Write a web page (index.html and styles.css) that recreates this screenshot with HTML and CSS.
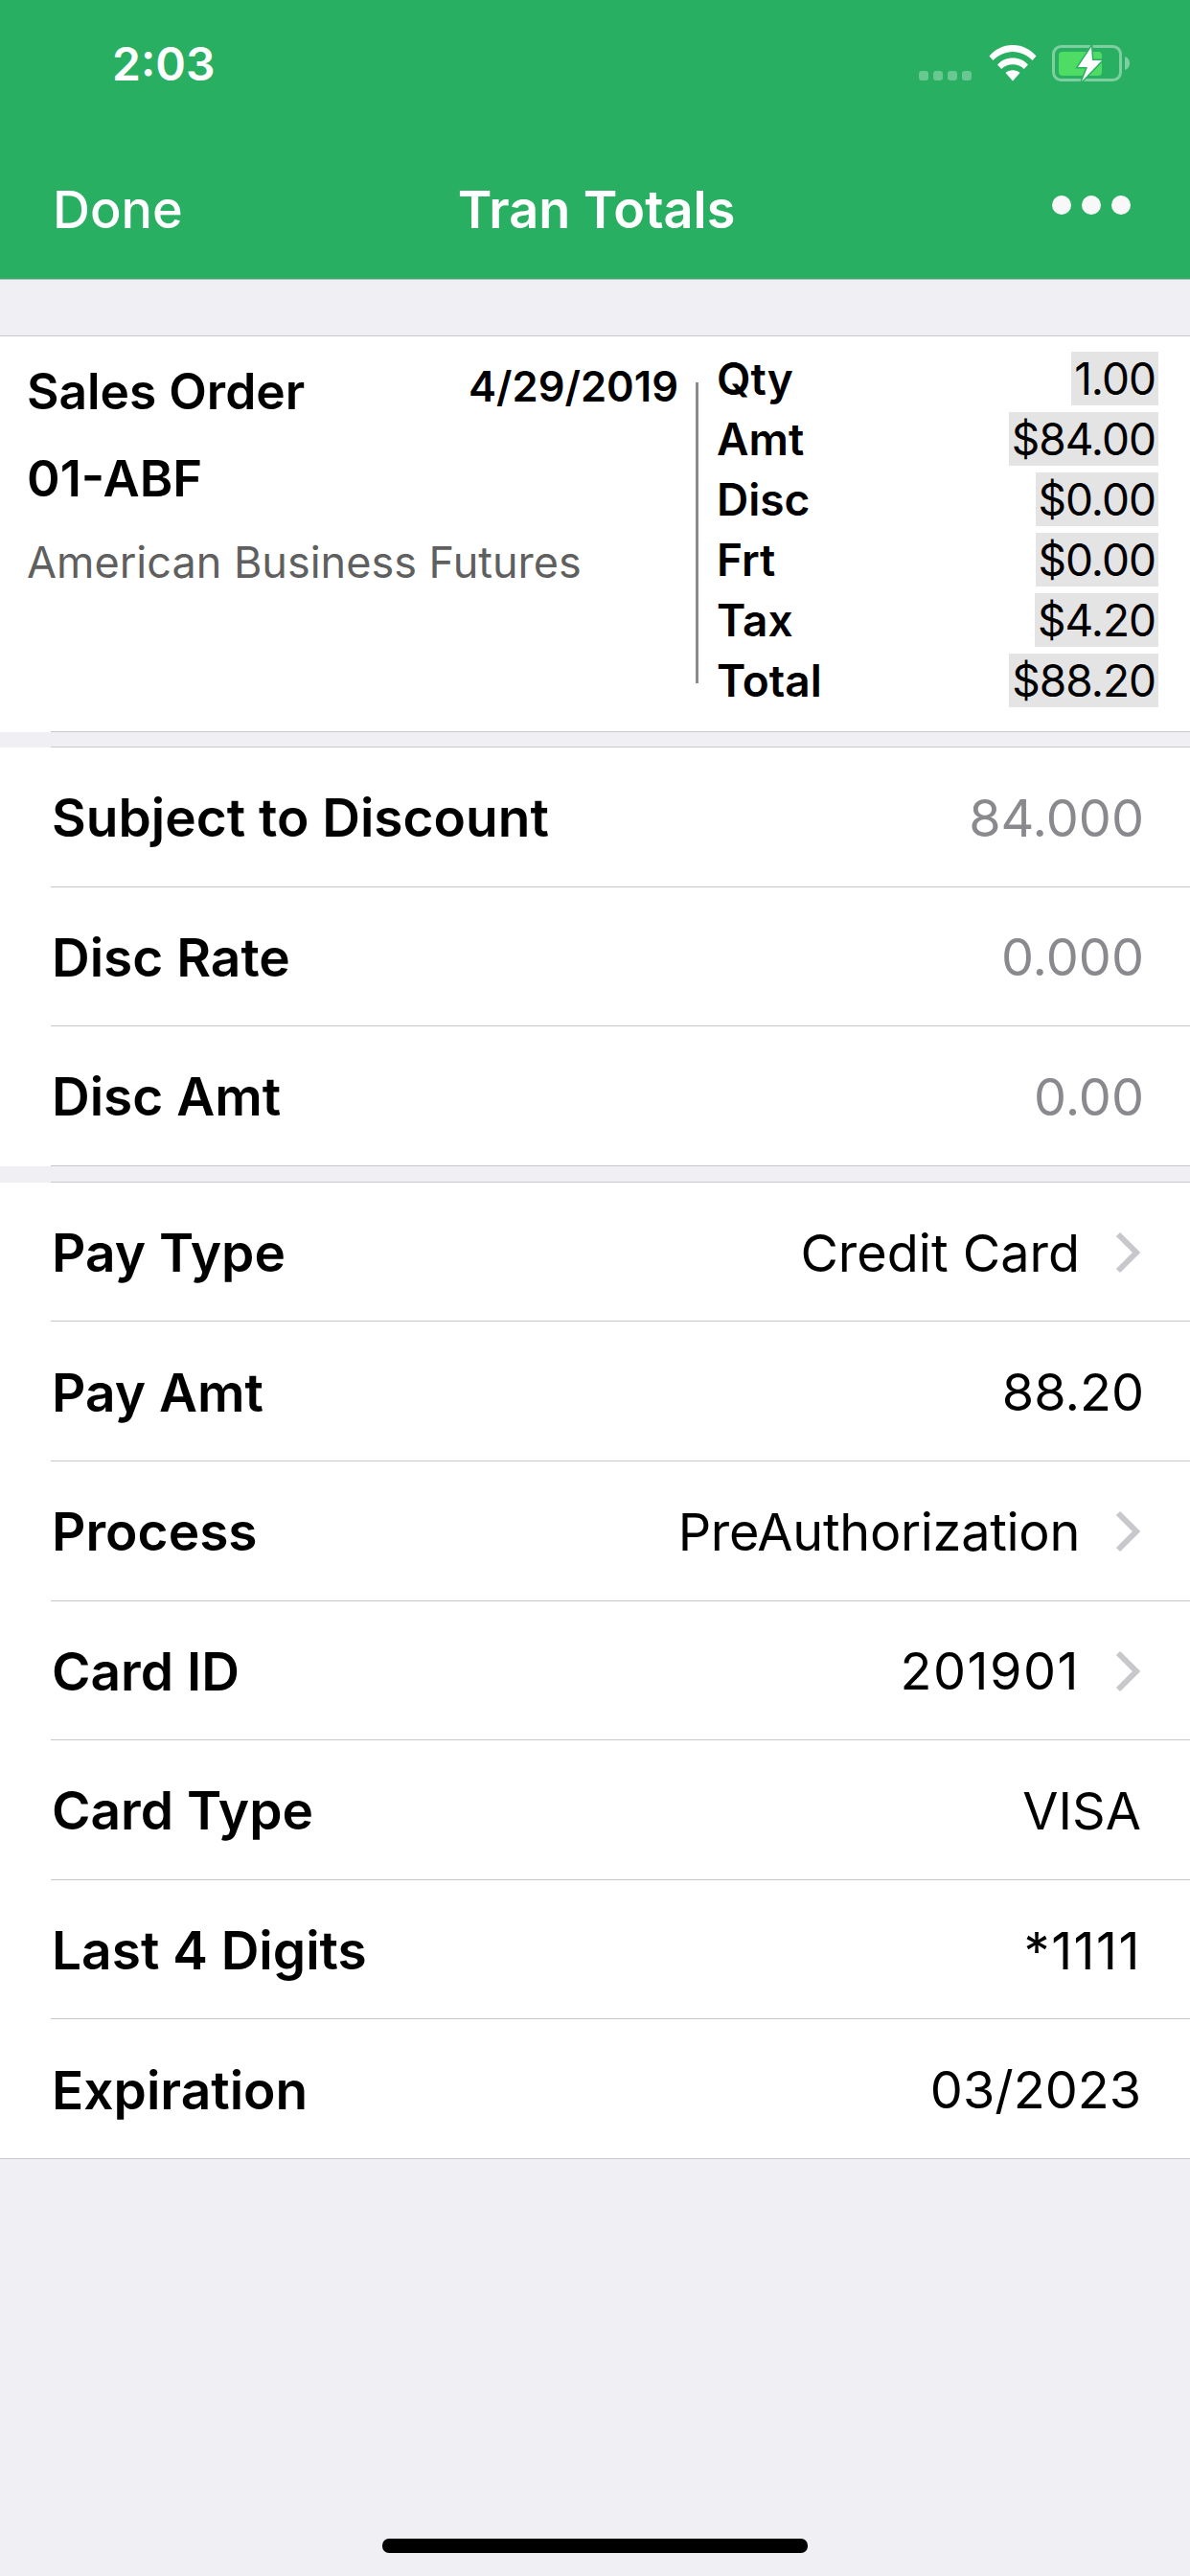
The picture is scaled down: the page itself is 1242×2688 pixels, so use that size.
FILE: index.html
```html
<!DOCTYPE html>
<html lang="en">
<head>
    <meta charset="UTF-8">
    <meta name="viewport" content="width=device-width, initial-scale=1.0">
    <title>Tran Totals</title>
    <link rel="stylesheet" href="styles.css">
</head>
<body>
    <header class="topbar">
        <div class="status">
            <span class="time">2:03</span>
            <div class="status-icons">
                <div class="signal"><i></i><i></i><i></i><i></i></div>
                <svg class="wifi" width="50" height="38" viewBox="0 0 50 38">
                    <path fill="#fff" d="M0.5 11.5C6.500 4.500 15 0 25 0s18.500 4.500 24.500 11.500l-4 4.500C40 10.500 33 7 25 7S10 10.500 4.500 16z"/>
                    <path fill="#fff" d="M9 20.500C13 16 18.500 13.500 25 13.500s12 2.500 16 7l-4.200 4.500C33.800 22 29.800 20.300 25 20.300S16.200 22 13.200 25z"/>
                    <path fill="#fff" d="M17.500 29C19.500 27.200 22 26.300 25 26.300s5.500 0.900 7.500 2.700L25 37.500z"/>
                </svg>
                <svg class="battery" width="82" height="38" viewBox="0 0 82 38">
                    <rect x="1.500" y="1.500" width="70" height="35" rx="8" fill="none" stroke="#fff" stroke-opacity="0.4" stroke-width="3"/>
                    <path d="M76 12c3 1 5 3.500 5 7s-2 6-5 7z" fill="#fff" fill-opacity="0.4"/>
                    <rect x="7" y="7" width="45" height="25" rx="4" fill="#4fdc64"/>
                    <path d="M41 2L27 23h10l-6 15 21-22H42z" fill="#fff" stroke="#29af62" stroke-width="3" paint-order="stroke"/>
                </svg>
            </div>
        </div>
        <nav class="navbar">
            <a class="nav-done">Done</a>
            <h1 class="nav-title">Tran Totals</h1>
            <div class="nav-more"><i></i><i></i><i></i></div>
        </nav>
    </header>

    <section class="summary">
        <div class="sum-left">
            <div class="sum-head">
                <span class="sum-type">Sales Order</span>
                <span class="sum-date">4/29/2019</span>
            </div>
            <div class="sum-code">01-ABF</div>
            <div class="sum-name">American Business Futures</div>
        </div>
        <div class="sum-divider"></div>
        <ul class="sum-totals">
            <li><b>Qty</b><span>1.00</span></li>
            <li><b>Amt</b><span>$84.00</span></li>
            <li><b>Disc</b><span>$0.00</span></li>
            <li><b>Frt</b><span>$0.00</span></li>
            <li><b>Tax</b><span>$4.20</span></li>
            <li><b>Total</b><span>$88.20</span></li>
        </ul>
    </section>

    <div class="gap gap-first"></div>
    <section class="group">
        <div class="row"><b>Subject to Discount</b><span class="num muted">84.000</span></div>
        <div class="row"><b>Disc Rate</b><span class="num muted">0.000</span></div>
        <div class="row"><b>Disc Amt</b><span class="num muted">0.00</span></div>
    </section>

    <div class="gap"></div>
    <section class="group">
        <div class="row"><b>Pay Type</b><span>Credit Card</span><svg class="chev" width="28" height="44" viewBox="0 0 28 44"><path d="M3 3l19 19L3 41" fill="none" stroke="#c7c7cc" stroke-width="6"/></svg></div>
        <div class="row"><b>Pay Amt</b><span class="num">88.20</span></div>
        <div class="row"><b>Process</b><span class="tight">PreAuthorization</span><svg class="chev" width="28" height="44" viewBox="0 0 28 44"><path d="M3 3l19 19L3 41" fill="none" stroke="#c7c7cc" stroke-width="6"/></svg></div>
        <div class="row"><b>Card ID</b><span class="wide">201901</span><svg class="chev" width="28" height="44" viewBox="0 0 28 44"><path d="M3 3l19 19L3 41" fill="none" stroke="#c7c7cc" stroke-width="6"/></svg></div>
        <div class="row"><b>Card Type</b><span>VISA</span></div>
        <div class="row"><b>Last 4 Digits</b><span class="wide">*1111</span></div>
        <div class="row row-last"><b>Expiration</b><span>03/2023</span></div>
    </section>

    <div class="home-bar"></div>
</body>
</html>
```

FILE: styles.css
```css
/* Global Styles */
* {
    box-sizing: border-box;
}
body {
    font-family: Inter, "Noto Sans", sans-serif;
    background-color: #efeff4;
    color: #000;
    margin: 0;
    height: 2688px;
    display: flex;
    flex-direction: column;
}

/* Green top bar */
.topbar {
    background-color: #29af62;
    color: #fff;
    height: 292px;
    border-bottom: 1px solid #b9b9bd;
}
.status {
    display: flex;
    justify-content: space-between;
    height: 180px;
    padding: 42px 62px 0 117px;
}
.time {
    font-size: 48px;
    font-weight: 600;
    line-height: 50px;
}
.status-icons {
    display: flex;
    align-items: flex-start;
    padding-top: 5px;
}
.signal {
    display: flex;
    gap: 5px;
    margin: 27px 18px 0 0;
}
.signal i {
    width: 10px;
    height: 10px;
    border-radius: 3px;
    background-color: rgba(255, 255, 255, 0.3);
}
.battery {
    margin-left: 16px;
}
.navbar {
    display: grid;
    grid-template-columns: 1fr auto 1fr;
    align-items: center;
    height: 76px;
    padding: 0 62px 0 55px;
}
.nav-done {
    font-size: 54px;
    font-weight: 500;
}
.nav-title {
    font-size: 54px;
    font-weight: 600;
    margin: 0 0 0 10px;
}
.nav-more {
    display: flex;
    justify-content: flex-end;
    gap: 11px;
    margin-bottom: 8px;
}
.nav-more i {
    width: 20px;
    height: 20px;
    border-radius: 50%;
    background-color: #f8f8f8;
}

/* Order summary card */
.summary {
    display: flex;
    height: 414px;
    margin-top: 58px;
    padding: 0 33px 0 28px;
    background-color: #fff;
    border-top: 1px solid #c8c7cc;
}
.sum-left {
    width: 680px;
}
.sum-head {
    display: flex;
    justify-content: space-between;
    align-items: flex-start;
    padding-top: 26px;
}
.sum-type {
    font-size: 51.5px;
    font-weight: 600;
    line-height: 62px;
}
.sum-date {
    font-size: 43.5px;
    font-weight: 600;
    line-height: 52px;
}
.sum-code {
    font-size: 52.5px;
    font-weight: 600;
    line-height: 62px;
    margin-top: 29px;
}
.sum-name {
    font-size: 45px;
    color: #5f5f5f;
    line-height: 56px;
    margin-top: 29px;
}
.sum-divider {
    width: 3px;
    height: 314px;
    margin: 48px 19px 0 18px;
    background-color: #8a8a8a;
}
.sum-totals {
    flex: 1;
    list-style: none;
    margin: 0;
    padding: 12px 0 0;
}
.sum-totals li {
    display: flex;
    justify-content: space-between;
    align-items: center;
    height: 63px;
    font-size: 46px;
}
.sum-totals b {
    font-weight: 600;
}
.sum-totals span {
    background-color: #e4e4e4;
    letter-spacing: -1px;
    line-height: 56px;
    padding: 0 3px;
}

/* Table rows */
.gap {
    height: 17px;
}
.gap::after {
    content: "";
    display: block;
    height: 1px;
    margin: 16px 0 0 53px;
    background-color: #c8c7cc;
}
.gap-first {
    height: 16px;
}
.gap-first::before {
    content: "";
    display: block;
    height: 1px;
    margin: -1px 0 0 53px;
    background-color: #c8c7cc;
}
.gap-first::after {
    margin-top: 15px;
}
.group {
    background-color: #fff;
}
.row {
    display: flex;
    align-items: center;
    height: 145.6px;
    margin-left: 53px;
    padding: 2px 51px 0 1px;
    font-size: 54px;
    border-bottom: 1px solid #c8c7cc;
}
.row b {
    font-size: 55px;
    font-weight: 600;
    margin-right: auto;
}
.row .muted {
    color: #8a8a8e;
}
.row .num {
    margin-right: -3px;
}
.row .tight {
    letter-spacing: -0.3px;
}
.row .wide {
    letter-spacing: 1.5px;
}
.chev {
    margin-left: 37px;
    margin-right: -1px;
}
.row-last {
    margin-left: 0;
    padding-left: 54px;
}

.home-bar {
    width: 444px;
    height: 15px;
    margin: auto auto 24px;
    border-radius: 7px;
    background-color: #000;
}
```
